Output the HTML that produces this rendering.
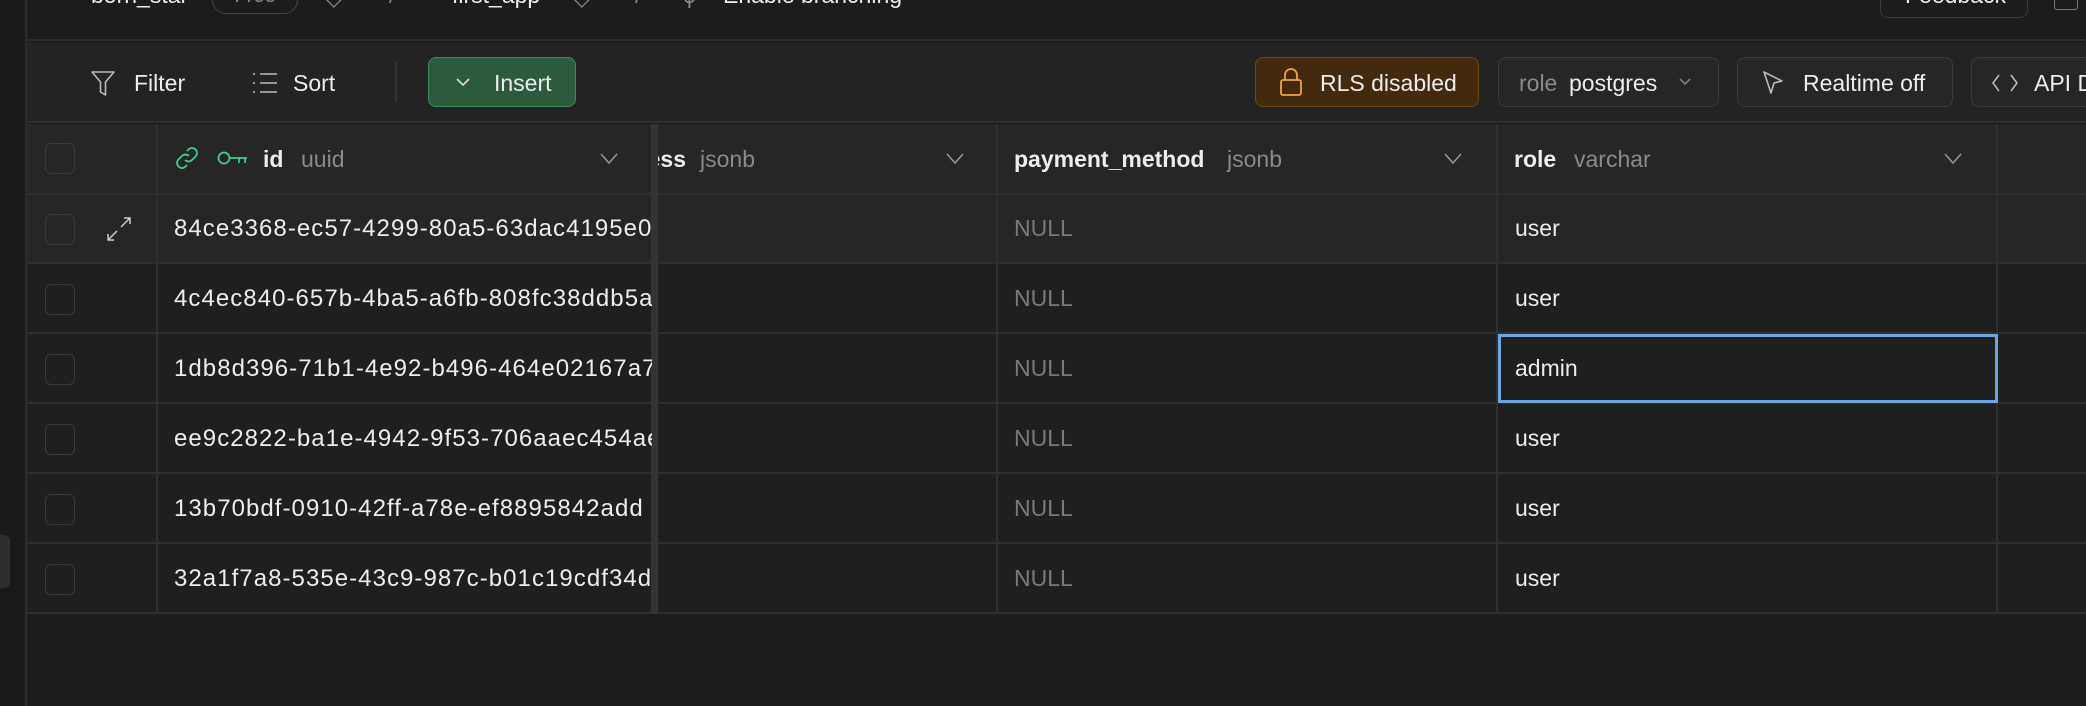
<!DOCTYPE html>
<html><head><meta charset="utf-8"><style>
*{box-sizing:border-box;margin:0;padding:0}
body{width:2086px;height:706px;background:#1c1c1c;font-family:"Liberation Sans",sans-serif;color:#ededed;position:relative;overflow:hidden}
.a{position:absolute;white-space:nowrap}
.t{font-size:23px;line-height:28px}
.g{color:#8a8a8a}
.btn{position:absolute;border-radius:8px;border:1.5px solid #3a3a3a;background:#262626}
.hl{position:absolute;left:27px;right:0;height:2px;background:#2f2f2f}
.vl{position:absolute;width:2px;background:#2f2f2f}
.cb{position:absolute;left:45px;width:30px;height:31px;border:1.5px solid #3a3a3a;border-radius:6px}
.id{position:absolute;left:174px;font-size:24px;letter-spacing:1.05px;line-height:28px;width:478px;overflow:hidden;white-space:nowrap}
.nul{position:absolute;left:1014px;font-size:23px;color:#7a7a7a}
.usr{position:absolute;left:1515px;font-size:23px}
</style></head><body>
<div class="a" style="left:0;top:0;width:27px;height:706px;background:#1a1a1a;border-right:2px solid #2c2c2c"></div>
<div class="a" style="left:0;top:535px;width:10px;height:53px;background:#2e2e2e;border-radius:0 6px 6px 0"></div>
<div class="a" style="left:27px;top:0;right:0;height:41px;background:#1c1c1c;border-bottom:2px solid #2c2c2c"></div>
<div class="a t" style="left:91px;top:-19px">born_star</div>
<div class="a" style="left:212px;top:-20px;width:86px;height:34px;border:1.5px solid #444;border-radius:14px;color:#888;font-size:20px;text-align:center;line-height:30px">Free</div>
<div class="a t g" style="left:325px;top:-17px">◇</div>
<div class="a t g" style="left:389px;top:-19px">/</div>
<div class="a t" style="left:452px;top:-19px">first_app</div>
<div class="a t g" style="left:573px;top:-17px">◇</div>
<div class="a t g" style="left:635px;top:-19px">/</div>
<div class="a t g" style="left:683px;top:-19px">ϕ</div>
<div class="a t" style="left:723px;top:-19px">Enable branching</div>
<div class="btn" style="left:1880px;top:-12px;width:148px;height:30px;background:#1c1c1c"></div>
<div class="a t" style="left:1905px;top:-19px">Feedback</div>
<div class="a" style="left:2054px;top:-10px;width:24px;height:20px;border:1.5px solid #777;border-radius:3px"></div>
<div class="a" style="left:27px;top:42px;right:0;height:81px;background:#232323;border-bottom:2px solid #2e2e2e"></div>
<svg class="a" style="left:90px;top:69px" width="26" height="28" viewBox="0 0 26 28"><path d="M2 3h22l-8.5 10v13l-5-3V13z" fill="none" stroke="#bbb" stroke-width="1.6" stroke-linejoin="round"/></svg>
<div class="a t" style="left:134px;top:69px">Filter</div>
<svg class="a" style="left:252px;top:71px" width="26" height="24" viewBox="0 0 26 24"><path d="M1 3h2M1 12h2M1 21h2M8 3h17M8 12h17M8 21h17" stroke="#bbb" stroke-width="1.6"/></svg>
<div class="a t" style="left:293px;top:69px">Sort</div>
<div class="a" style="left:395px;top:62px;width:2px;height:40px;background:#333"></div>
<div class="btn" style="left:428px;top:57px;width:148px;height:50px;background:#2b5a3d;border-color:#3f8a5a"></div>
<svg class="a" style="left:455px;top:76px" width="16" height="12" viewBox="0 0 16 12"><path d="M2 3l6 6 6-6" fill="none" stroke="#ddd" stroke-width="1.6"/></svg>
<div class="a t" style="left:494px;top:69px">Insert</div>
<div class="btn" style="left:1255px;top:57px;width:224px;height:50px;background:#43290e;border-color:#6e4716"></div>
<svg class="a" style="left:1279px;top:67px" width="24" height="30" viewBox="0 0 24 30"><rect x="2" y="13" width="20" height="15" rx="2" fill="none" stroke="#f0a53a" stroke-width="1.8"/><path d="M6 13V8a6 6 0 0 1 12 0v5" fill="none" stroke="#f0a53a" stroke-width="1.8"/></svg>
<div class="a t" style="left:1320px;top:69px">RLS disabled</div>
<div class="btn" style="left:1498px;top:57px;width:221px;height:50px"></div>
<div class="a t g" style="left:1519px;top:69px">role</div>
<div class="a t" style="left:1569px;top:69px">postgres</div>
<svg class="a" style="left:1678px;top:77px" width="14" height="10" viewBox="0 0 14 10"><path d="M2 2l5 5 5-5" fill="none" stroke="#888" stroke-width="1.5"/></svg>
<div class="btn" style="left:1737px;top:57px;width:216px;height:50px"></div>
<svg class="a" style="left:1762px;top:70px" width="22" height="26" viewBox="0 0 22 26"><path d="M2 2l18 9-8 2-3 10z" fill="none" stroke="#bbb" stroke-width="1.6" stroke-linejoin="round"/></svg>
<div class="a t" style="left:1803px;top:69px">Realtime off</div>
<div class="btn" style="left:1971px;top:57px;width:140px;height:50px"></div>
<svg class="a" style="left:1991px;top:72px" width="28" height="22" viewBox="0 0 28 22"><path d="M8 3L2 11l6 8M20 3l6 8-6 8" fill="none" stroke="#bbb" stroke-width="1.6"/></svg>
<div class="a t" style="left:2034px;top:69px">API Docs</div>
<div class="a" style="left:27px;top:124px;right:0;height:69px;background:#262626"></div>
<div class="a" style="left:27px;top:194px;right:0;height:69px;background:#262626"></div>
<div class="a" style="left:27px;top:264px;right:0;height:349px;background:#1f1f1f"></div>
<div class="hl" style="top:193px"></div>
<div class="hl" style="top:262px"></div>
<div class="hl" style="top:332px"></div>
<div class="hl" style="top:402px"></div>
<div class="hl" style="top:472px"></div>
<div class="hl" style="top:542px"></div>
<div class="hl" style="top:612px"></div>
<div class="vl" style="left:156px;top:124px;height:490px"></div>
<div class="a" style="left:651px;top:124px;width:7px;height:490px;background:#333"></div>
<div class="vl" style="left:996px;top:124px;height:490px"></div>
<div class="vl" style="left:1496px;top:124px;height:490px"></div>
<div class="vl" style="left:1996px;top:124px;height:490px"></div>
<div class="cb" style="top:143px"></div>
<svg class="a" style="left:174px;top:145px" width="26" height="26" viewBox="0 0 26 26"><path d="M11 15a5 5 0 0 0 7 0l4-4a5 5 0 0 0-7-7l-2 2M15 11a5 5 0 0 0-7 0l-4 4a5 5 0 0 0 7 7l2-2" fill="none" stroke="#3ecf8e" stroke-width="1.8"/></svg>
<svg class="a" style="left:217px;top:148px" width="32" height="20" viewBox="0 0 32 20"><circle cx="7" cy="10" r="5.5" fill="none" stroke="#3ecf8e" stroke-width="1.8"/><path d="M13 10h17M22 10v5M28 10v5" stroke="#3ecf8e" stroke-width="1.8"/></svg>
<div class="a t" style="left:263px;top:145px;font-weight:bold">id</div>
<div class="a t g" style="left:301px;top:145px">uuid</div>
<div class="a t" style="left:658px;top:145px;font-weight:bold;width:28px;overflow:hidden;direction:rtl">ess</div>
<div class="a t g" style="left:700px;top:145px">jsonb</div>
<div class="a t" style="left:1014px;top:145px;font-weight:bold">payment_method</div>
<div class="a t g" style="left:1227px;top:145px">jsonb</div>
<div class="a t" style="left:1514px;top:145px;font-weight:bold">role</div>
<div class="a t g" style="left:1574px;top:145px">varchar</div>
<svg class="a" style="left:599px;top:152px" width="20" height="14" viewBox="0 0 20 14"><path d="M2 2l8 9 8-9" fill="none" stroke="#999" stroke-width="1.5"/></svg>
<svg class="a" style="left:945px;top:152px" width="20" height="14" viewBox="0 0 20 14"><path d="M2 2l8 9 8-9" fill="none" stroke="#999" stroke-width="1.5"/></svg>
<svg class="a" style="left:1443px;top:152px" width="20" height="14" viewBox="0 0 20 14"><path d="M2 2l8 9 8-9" fill="none" stroke="#999" stroke-width="1.5"/></svg>
<svg class="a" style="left:1943px;top:152px" width="20" height="14" viewBox="0 0 20 14"><path d="M2 2l8 9 8-9" fill="none" stroke="#999" stroke-width="1.5"/></svg>
<div class="cb" style="top:214px"></div>
<svg class="a" style="left:106px;top:216px" width="26" height="26" viewBox="0 0 26 26"><path d="M15 11l9-9M18 2h6v6M11 15l-9 9M2 18v6h6" fill="none" stroke="#ccc" stroke-width="1.5"/></svg>
<div class="id" style="top:215px">84ce3368-ec57-4299-80a5-63dac4195e0a</div>
<div class="nul" style="top:215px">NULL</div><div class="usr" style="top:215px">user</div>
<div class="cb" style="top:284px"></div>
<div class="id" style="top:285px">4c4ec840-657b-4ba5-a6fb-808fc38ddb5a</div>
<div class="nul" style="top:285px">NULL</div><div class="usr" style="top:285px">user</div>
<div class="cb" style="top:354px"></div>
<div class="id" style="top:355px">1db8d396-71b1-4e92-b496-464e02167a7b</div>
<div class="nul" style="top:355px">NULL</div>
<div class="a" style="left:1498px;top:334px;width:500px;height:69px;border:3px solid #6ea6e2"></div>
<div class="usr" style="top:355px">admin</div>
<div class="cb" style="top:424px"></div>
<div class="id" style="top:425px">ee9c2822-ba1e-4942-9f53-706aaec454ae</div>
<div class="nul" style="top:425px">NULL</div><div class="usr" style="top:425px">user</div>
<div class="cb" style="top:494px"></div>
<div class="id" style="top:495px">13b70bdf-0910-42ff-a78e-ef8895842add</div>
<div class="nul" style="top:495px">NULL</div><div class="usr" style="top:495px">user</div>
<div class="cb" style="top:564px"></div>
<div class="id" style="top:565px">32a1f7a8-535e-43c9-987c-b01c19cdf34d</div>
<div class="nul" style="top:565px">NULL</div><div class="usr" style="top:565px">user</div>
</body></html>
